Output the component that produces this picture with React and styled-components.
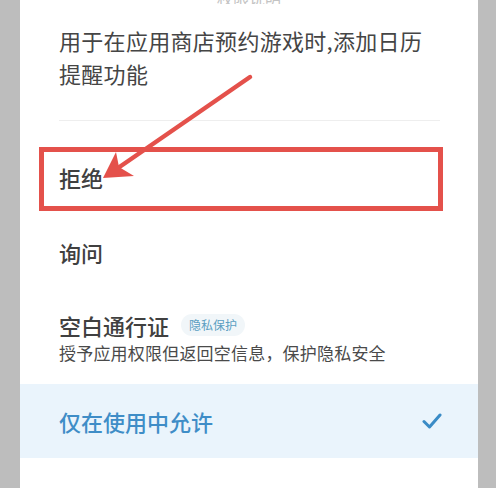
import React from "react";
import styled, { createGlobalStyle } from "styled-components";

const Global = createGlobalStyle`
  html, body { margin: 0; padding: 0; background: #bdbdbd; }
  body { font-family: "Noto Sans CJK SC", "Noto Sans", sans-serif; }
`;

const Page = styled.div`
  position: relative;
  width: 496px;
  height: 488px;
  overflow: hidden;
  background: #bdbdbd;
  display: flex;
  padding-left: 20px;
  box-sizing: border-box;
`;

const Panel = styled.div`
  width: 458px;
  height: 488px;
  background: #ffffff;
  display: flex;
  flex-direction: column;
`;

const TitleCut = styled.div`
  height: 4px;
  overflow: hidden;
  display: flex;
  justify-content: center;
  align-items: flex-end;
`;

const TitleText = styled.div`
  font-size: 16px;
  line-height: 16px;
  color: #c4c4c4;
  margin-bottom: -2px;
  white-space: nowrap;
`;

const Description = styled.p`
  margin: 20px 0 0;
  padding: 0 30px 0 39px;
  font-size: 22px;
  line-height: 33px;
  letter-spacing: 0.3px;
  color: #454545;
  white-space: nowrap;
`;

const Divider = styled.div`
  margin: 30px 38px 0 39px;
  height: 1px;
  background: #eeeeee;
`;

const Options = styled.div`
  margin-top: 18px;
  display: flex;
  flex-direction: column;
`;

const Option = styled.div`
  height: ${(p) => p.$h || 75}px;
  display: flex;
  align-items: center;
  justify-content: space-between;
  padding: 0 36px 0 39px;
  background: ${(p) => (p.$selected ? "#eaf4fc" : "transparent")};
  box-sizing: border-box;
`;

const OptionBody = styled.div`
  display: flex;
  flex-direction: column;
  gap: 2px;
`;

const OptionTitleRow = styled.div`
  display: flex;
  align-items: center;
  gap: 12px;
`;

const OptionLabel = styled.span`
  font-size: 22px;
  line-height: 30px;
  font-weight: 500;
  color: ${(p) => (p.$selected ? "#3f8dc7" : "#404040")};
`;

const OptionSub = styled.span`
  font-size: 17px;
  line-height: 22px;
  letter-spacing: 0.2px;
  color: #4a4a4a;
`;

const Badge = styled.span`
  display: inline-flex;
  align-items: center;
  height: 22px;
  padding: 0 8px;
  border-radius: 11px;
  background: #f1f6f9;
  color: #5b9fc2;
  font-size: 12px;
  line-height: 22px;
`;

const Check = styled.svg`
  width: 20px;
  height: 18px;
`;

const RedBox = styled.div`
  position: absolute;
  left: 39px;
  top: 147px;
  width: 404px;
  height: 64px;
  border: 5px solid #e4514b;
  box-sizing: border-box;
  pointer-events: none;
`;

const ArrowLayer = styled.svg`
  position: absolute;
  left: 0;
  top: 0;
  width: 496px;
  height: 488px;
  pointer-events: none;
`;

export default function App() {
  return (
    <>
      <Global />
      <Page>
        <Panel>
          <TitleCut>
            <TitleText>权限说明</TitleText>
          </TitleCut>
          <Description>
            用于在应用商店预约游戏时,添加日历
            <br />
            提醒功能
          </Description>
          <Divider />
          <Options>
            <Option>
              <OptionLabel>拒绝</OptionLabel>
            </Option>
            <Option>
              <OptionLabel>询问</OptionLabel>
            </Option>
            <Option $h={95}>
              <OptionBody>
                <OptionTitleRow>
                  <OptionLabel>空白通行证</OptionLabel>
                  <Badge>隐私保护</Badge>
                </OptionTitleRow>
                <OptionSub>授予应用权限但返回空信息，保护隐私安全</OptionSub>
              </OptionBody>
            </Option>
            <Option $selected $h={74}>
              <OptionLabel $selected>仅在使用中允许</OptionLabel>
              <Check viewBox="0 0 20 18">
                <path
                  d="M2 9.5 L7.5 15 L18 3"
                  fill="none"
                  stroke="#3a8bc6"
                  strokeWidth="3"
                  strokeLinecap="round"
                  strokeLinejoin="round"
                />
              </Check>
            </Option>
          </Options>
        </Panel>
        <RedBox />
        <ArrowLayer viewBox="0 0 496 488">
          <line
            x1="250"
            y1="77"
            x2="118"
            y2="168"
            stroke="#e4514b"
            strokeWidth="4.5"
            strokeLinecap="round"
          />
          <polygon
            points="103,178 116,152 119,167 134,176"
            fill="#e4514b"
          />
        </ArrowLayer>
      </Page>
    </>
  );
}
